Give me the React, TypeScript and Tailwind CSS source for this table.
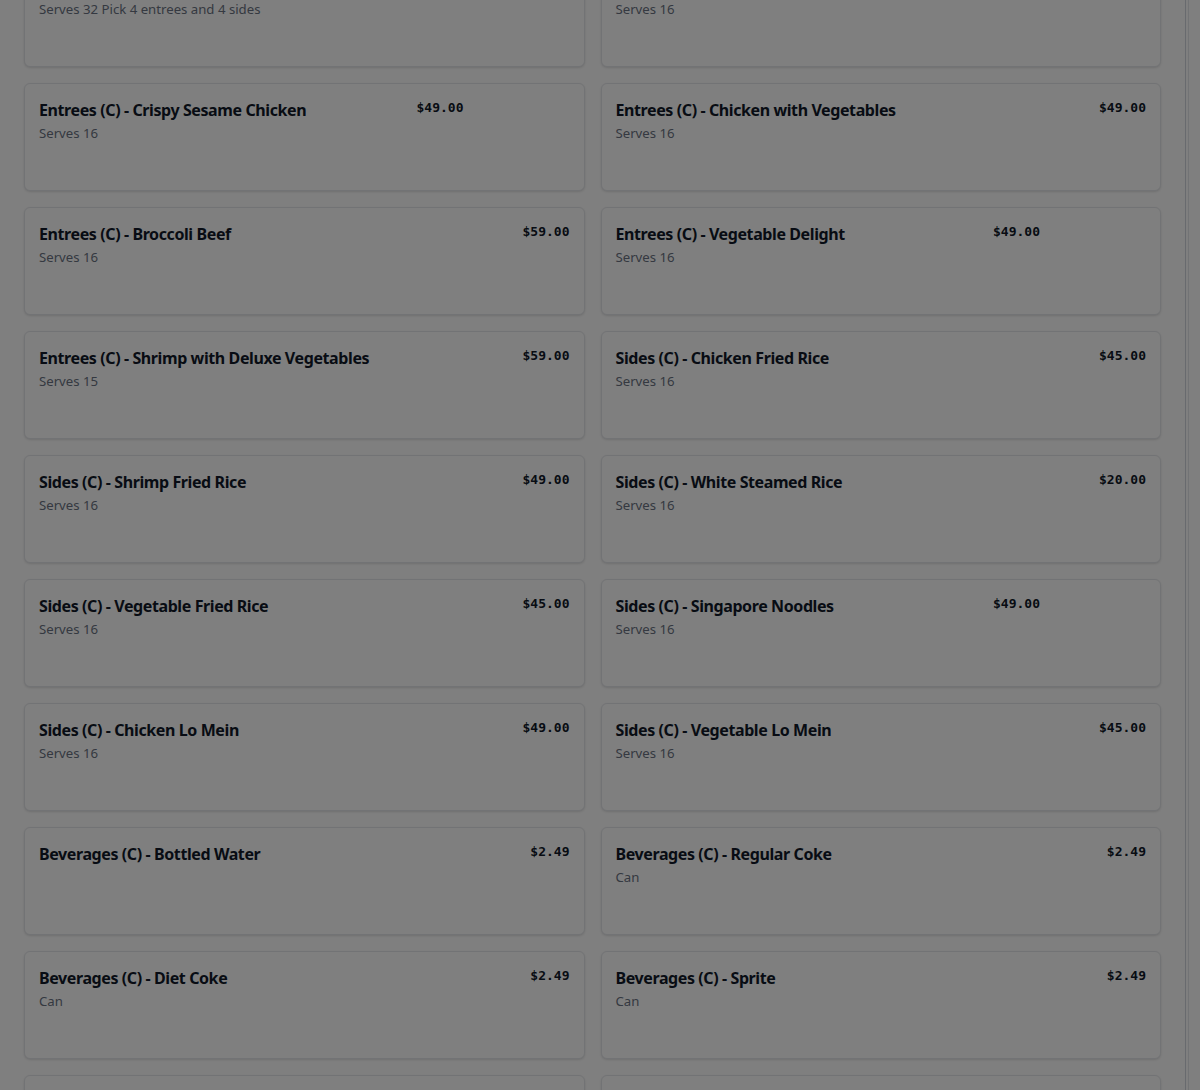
import React from 'react';

type Item = {
  name: string;
  note?: string;
  price: string;
  thumb?: boolean;
};

const items: Item[] = [
  { name: 'Family Meal (C) - Party Tray', note: 'Serves 32 Pick 4 entrees and 4 sides', price: '$299.00' },
  { name: 'Entrees (C) - Orange Chicken', note: 'Serves 16', price: '$49.00' },
  { name: 'Entrees (C) - Crispy Sesame Chicken', note: 'Serves 16', price: '$49.00', thumb: true },
  { name: 'Entrees (C) - Chicken with Vegetables', note: 'Serves 16', price: '$49.00' },
  { name: 'Entrees (C) - Broccoli Beef', note: 'Serves 16', price: '$59.00' },
  { name: 'Entrees (C) - Vegetable Delight', note: 'Serves 16', price: '$49.00', thumb: true },
  { name: 'Entrees (C) - Shrimp with Deluxe Vegetables', note: 'Serves 15', price: '$59.00' },
  { name: 'Sides (C) - Chicken Fried Rice', note: 'Serves 16', price: '$45.00' },
  { name: 'Sides (C) - Shrimp Fried Rice', note: 'Serves 16', price: '$49.00' },
  { name: 'Sides (C) - White Steamed Rice', note: 'Serves 16', price: '$20.00' },
  { name: 'Sides (C) - Vegetable Fried Rice', note: 'Serves 16', price: '$45.00' },
  { name: 'Sides (C) - Singapore Noodles', note: 'Serves 16', price: '$49.00', thumb: true },
  { name: 'Sides (C) - Chicken Lo Mein', note: 'Serves 16', price: '$49.00' },
  { name: 'Sides (C) - Vegetable Lo Mein', note: 'Serves 16', price: '$45.00' },
  { name: 'Beverages (C) - Bottled Water', price: '$2.49' },
  { name: 'Beverages (C) - Regular Coke', note: 'Can', price: '$2.49' },
  { name: 'Beverages (C) - Diet Coke', note: 'Can', price: '$2.49' },
  { name: 'Beverages (C) - Sprite', note: 'Can', price: '$2.49' },
  { name: 'Beverages (C) - Iced Tea', note: 'Bottle', price: '$2.99' },
  { name: 'Beverages (C) - Lemonade', note: 'Bottle', price: '$2.99' },
];

const MenuCard: React.FC<{ item: Item }> = ({ item }) => (
  <div className="h-[108px] rounded-md border border-gray-200 bg-white shadow-sm pl-[14px] pr-[14px] pt-[14px] flex items-start justify-between">
    <div className="flex flex-col">
      <h3 className="text-base leading-6 font-bold tracking-[-0.4px] text-gray-900">{item.name}</h3>
      {item.note && <p className="text-[13.2px] leading-5 text-gray-500 mt-[1px]">{item.note}</p>}
    </div>
    <div className={`flex shrink-0 ${item.thumb ? 'mr-[106px]' : ''}`}>
      <span className="font-['DejaVu_Sans_Mono',monospace] text-[13px] leading-5 font-bold text-gray-900">
        {item.price}
      </span>
    </div>
  </div>
);

export default function App() {
  return (
    <div className="relative h-[1090px] w-[1200px] overflow-hidden bg-white font-['Noto_Sans',sans-serif]">
      <div className="flex h-full">
        <div className="flex-1 px-6">
          <div className="-mt-[41px] grid grid-cols-2 gap-4">
            {items.map((item, i) => (
              <MenuCard key={i} item={item} />
            ))}
          </div>
        </div>
        <div className="w-[15px] border-l border-gray-300 bg-white flex">
          <div className="ml-[2px] w-[1px] bg-gray-200" />
        </div>
      </div>
      {/* modal backdrop */}
      <div className="absolute inset-0 bg-black/50" />
    </div>
  );
}
